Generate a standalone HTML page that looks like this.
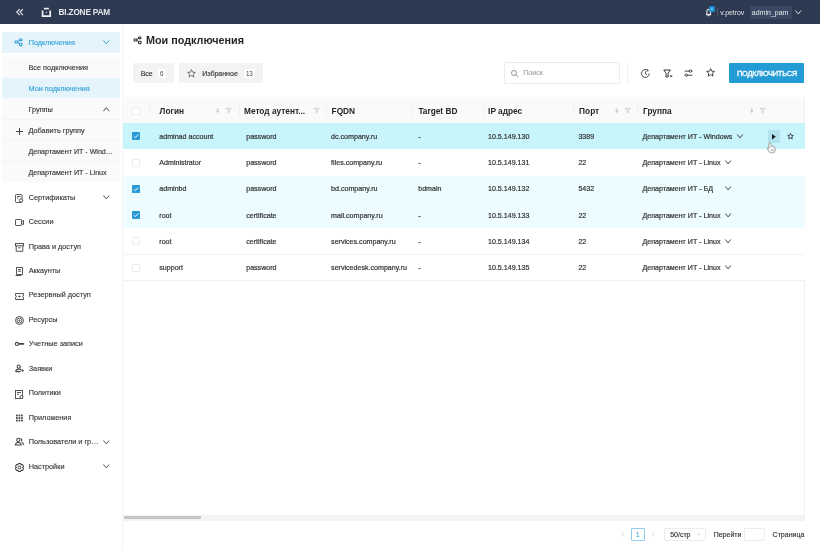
<!DOCTYPE html><html><head><meta charset="utf-8"><style>
*{box-sizing:border-box;margin:0;padding:0}
html,body{width:820px;height:551px;overflow:hidden;background:#fff;font-family:"Liberation Sans",sans-serif;color:#333}
.a{position:absolute;white-space:nowrap}
svg{position:absolute;overflow:visible}
#hdr{position:absolute;left:0;top:0;width:820px;height:24px;background:#2d3a51}
.si{position:absolute;font-size:7.3px;color:#333;line-height:10px;white-space:nowrap;-webkit-text-stroke:0.12px currentColor}
.th{position:absolute;font-size:8.3px;font-weight:bold;color:#262626;line-height:10px;white-space:nowrap}
.td{position:absolute;font-size:7.1px;color:#333;line-height:10px;white-space:nowrap;-webkit-text-stroke:0.2px currentColor}
.sep{position:absolute;width:1px;height:10px;top:105.5px;background:#efefef}
.cb{position:absolute;width:8px;height:8px;border:1px solid #ececec;background:#fff;border-radius:1px}
.cbc{position:absolute;width:8px;height:8px;background:#2a9ad6;border-radius:1px}
.tx{position:absolute;font-size:7px;color:#333;line-height:10px;white-space:nowrap;-webkit-text-stroke:0.15px currentColor}
</style></head><body><div id="root" style="position:absolute;left:0;top:0;width:820px;height:551px;will-change:transform">
<div id="hdr">
<svg style="left:15px;top:8px" width="10" height="9" viewBox="0 0 10 9"><path d="M4.7 1.1 L1.8 4.1 L4.7 7.1 M7.9 1.1 L5 4.1 L7.9 7.1" fill="none" stroke="#e6e9ee" stroke-width="1.15"/></svg>
<svg style="left:41px;top:7px" width="11" height="11" viewBox="0 0 11 11"><rect x="3" y="0.8" width="4.9" height="1.6" fill="#f2f3f5"/><path d="M1.6 3.6 V9.2 H9.2 V3.6" fill="none" stroke="#f2f3f5" stroke-width="1.7"/><rect x="4.8" y="4.9" width="1.1" height="1.1" fill="#f2f3f5"/></svg>
<div class="a" style="left:58.6px;top:6.6px;font-size:8.3px;font-weight:bold;color:#e4e7ec;line-height:11px;letter-spacing:-0.22px">BI.ZONE PAM</div>
<svg style="left:705px;top:6px" width="11" height="11" viewBox="0 0 11 11"><path d="M1 8.6 H6.2 M1.9 8.4 V5.6 C1.9 4 2.8 3.2 3.7 3.2 C4.6 3.2 5.4 4 5.4 5.6 V8.4 M3 9.6 H4.4" fill="none" stroke="#e6e9ee" stroke-width="1.1"/><rect x="4.2" y="0.3" width="5.5" height="5.5" fill="#1f9ae0"/><path d="M6.2 2.3 L7.6 3.7 M7.6 2.3 L6.2 3.7" stroke="#bfe3f7" stroke-width="0.6"/></svg>
<div class="a" style="left:716.6px;top:8.3px;width:1.2px;height:7.4px;background:#4d5a70"></div>
<div class="a" style="left:720.3px;top:7.6px;font-size:6.9px;color:#e6e9ee;line-height:10px">v.petrov</div>
<div class="a" style="left:749.5px;top:6px;width:42px;height:13px;background:#3a4963;border-radius:1px"></div>
<div class="a" style="left:751.8px;top:7.6px;font-size:7px;color:#e6e9ee;line-height:10px">admin_pam</div>
<svg style="left:795px;top:10px" width="7" height="5" viewBox="0 0 7 5"><path d="M0.5 0.5 L3.3 4 L6.1 0.5" fill="none" stroke="#e6e9ee" stroke-width="0.9"/></svg>
</div>
<div class="a" style="left:122px;top:24px;width:1px;height:527px;background:#f5f5f5"></div>
<div class="a" style="left:2px;top:32.2px;width:118px;height:20.7px;background:#e5f3fa"></div>
<svg style="left:14.4px;top:38.4px" width="10" height="9" viewBox="0 0 10 9"><rect x="1.05" y="3.05" width="2.8" height="1.9" rx="0.7" fill="none" stroke="#31a0d8" stroke-width="1.1"/><rect x="5.45" y="1.05" width="2.5" height="1.6" rx="0.7" fill="none" stroke="#31a0d8" stroke-width="1.1"/><rect x="5.45" y="5.25" width="2.6" height="2.4" rx="0.8" fill="none" stroke="#31a0d8" stroke-width="1.1"/><path d="M3.9 3.6 L5.2 2.6 M3.9 4.5 L5.2 5.5" fill="none" stroke="#31a0d8" stroke-width="1"/></svg>
<div class="si" style="left:28.7px;top:37.8px;color:#31a0d8">Подключения</div>
<svg style="left:103.39999999999999px;top:39.900000000000006px" width="6.6" height="4.6" viewBox="0 0 6.6 4.6"><path d="M0.4 0.5 L3.30 3.90 L6.20 0.5" fill="none" stroke="#31a0d8" stroke-width="0.95"/></svg>
<div class="a" style="left:2px;top:56.8px;width:118px;height:125.6px;background:#fafafa"></div>
<div class="a" style="left:2px;top:78px;width:118px;height:20.2px;background:#e5f3fa"></div>
<div class="si" style="left:28.5px;top:63.00px;color:#333;">Все подключения</div>
<div class="si" style="left:28.5px;top:84.05px;color:#31a0d8;">Мои подключения</div>
<div class="si" style="left:28.5px;top:105.10px;color:#333;">Группы</div>
<div class="si" style="left:28.5px;top:126.15px;color:#333;">Добавить группу</div>
<div class="si" style="left:28.5px;top:147.20px;color:#333;font-size:7.1px;">Департамент ИТ - Wind…</div>
<div class="si" style="left:28.5px;top:168.25px;color:#333;font-size:7.1px;">Департамент ИТ - Linux</div>
<div class="a" style="left:2px;top:119.4px;width:118px;height:0.6px;background:#f3f3f3"></div>
<div class="a" style="left:2px;top:140.4px;width:118px;height:0.6px;background:#f3f3f3"></div>
<div class="a" style="left:2px;top:161.3px;width:118px;height:0.6px;background:#f3f3f3"></div>
<svg style="left:103.19999999999999px;top:107.2px" width="6.6" height="4.6" viewBox="0 0 6.6 4.6"><path d="M0.4 4.2 L3.3 0.6 L6.2 4.2" fill="none" stroke="#444" stroke-width="0.95"/></svg>
<svg style="left:15.8px;top:127.5px" width="7" height="7" viewBox="0 0 7 7"><path d="M3.5 0 V7 M0 3.5 H7" stroke="#333" stroke-width="0.9"/></svg>
<div class="si" style="left:28.7px;top:192.70px">Сертификаты</div>
<svg style="left:15px;top:194.00px" width="9" height="9" viewBox="0 0 9 9"><rect x="0.5" y="0.5" width="6.5" height="8" rx="0.8" fill="none" stroke="#444" stroke-width="0.9"/><path d="M2 2.5 H5.5 M2 4.2 H3.5" stroke="#444" stroke-width="0.9"/><circle cx="6" cy="6.5" r="1.7" fill="#fff" stroke="#444" stroke-width="0.9"/></svg>
<svg style="left:103.39999999999999px;top:195.29999999999998px" width="6.6" height="4.6" viewBox="0 0 6.6 4.6"><path d="M0.4 0.5 L3.30 3.90 L6.20 0.5" fill="none" stroke="#444" stroke-width="0.95"/></svg>
<div class="si" style="left:28.7px;top:217.14px">Сессии</div>
<svg style="left:15px;top:218.44px" width="9" height="9" viewBox="0 0 9 9"><rect x="0.5" y="1.5" width="6" height="6" rx="0.6" fill="none" stroke="#444" stroke-width="0.9"/><path d="M6.5 3.5 L8.5 2.5 V6.5 L6.5 5.5" fill="none" stroke="#444" stroke-width="0.9"/></svg>
<div class="si" style="left:28.7px;top:241.58px">Права и доступ</div>
<svg style="left:15px;top:242.88px" width="9" height="9" viewBox="0 0 9 9"><rect x="0.5" y="0.5" width="8" height="2.3" fill="none" stroke="#444" stroke-width="0.9"/><path d="M1.2 2.8 V8.3 H7.8 V2.8 M3.2 4.8 H5.8" fill="none" stroke="#444" stroke-width="0.9"/></svg>
<div class="si" style="left:28.7px;top:266.02px">Аккаунты</div>
<svg style="left:15px;top:267.32px" width="9" height="9" viewBox="0 0 9 9"><path d="M1.5 0.5 H7.5 V7.5 H1.5 Z M3 2.5 H6 M3 4.3 H6 M0.5 8.5 H6.5" fill="none" stroke="#444" stroke-width="0.9"/></svg>
<div class="si" style="left:28.7px;top:290.46px">Резервный доступ</div>
<svg style="left:15px;top:291.76px" width="9" height="9" viewBox="0 0 9 9"><path d="M0.5 1.5 H8.5 V3.6 A0.9 0.9 0 0 0 8.5 5.4 V7.5 H0.5 V5.4 A0.9 0.9 0 0 0 0.5 3.6 Z" fill="none" stroke="#444" stroke-width="0.9"/><path d="M3.3 4.5 H5.7 M4.5 3.4 V5.6" stroke="#444" stroke-width="0.8"/></svg>
<div class="si" style="left:28.7px;top:314.90px">Ресурсы</div>
<svg style="left:15px;top:316.20px" width="9" height="9" viewBox="0 0 9 9"><circle cx="4.5" cy="4.5" r="4" fill="none" stroke="#444" stroke-width="0.9"/><circle cx="4.5" cy="4.5" r="2.4" fill="none" stroke="#444" stroke-width="0.9"/><circle cx="4.5" cy="4.5" r="0.9" fill="#444"/></svg>
<div class="si" style="left:28.7px;top:339.34px">Учетные записи</div>
<svg style="left:15px;top:340.64px" width="9" height="9" viewBox="0 0 9 9"><circle cx="1.9" cy="2.9" r="1.55" fill="none" stroke="#444" stroke-width="1.1"/><rect x="3.5" y="2.1" width="5.8" height="1.7" rx="0.85" fill="#444"/></svg>
<div class="si" style="left:28.7px;top:363.78px">Заявки</div>
<svg style="left:15px;top:365.08px" width="9" height="9" viewBox="0 0 9 9"><circle cx="3.7" cy="1.6" r="1.6" fill="none" stroke="#444" stroke-width="1.05"/><path d="M0.6 6.6 C0.8 4.6 2 4.1 3.7 4.1 C5 4.1 5.8 4.5 6.2 5.2 M0.6 6.6 H5.5" fill="none" stroke="#444" stroke-width="1.05"/><path d="M6.4 5.6 H8.8 M7.6 4.4 V6.8" stroke="#444" stroke-width="1"/></svg>
<div class="si" style="left:28.7px;top:388.22px">Политики</div>
<svg style="left:15px;top:389.52px" width="9" height="9" viewBox="0 0 9 9"><rect x="0.5" y="0.5" width="7" height="8" fill="none" stroke="#444" stroke-width="0.9"/><path d="M2 2.5 H6 M2 4.2 H4" stroke="#444" stroke-width="0.9"/><circle cx="6.5" cy="7" r="1.5" fill="#fff" stroke="#444" stroke-width="0.9"/></svg>
<div class="si" style="left:28.7px;top:412.66px">Приложения</div>
<svg style="left:15px;top:413.96px" width="9" height="9" viewBox="0 0 9 9"><rect x="1.00" y="0.60" width="1.75" height="1.75" fill="#444"/><rect x="1.00" y="3.15" width="1.75" height="1.75" fill="#444"/><rect x="1.00" y="5.70" width="1.75" height="1.75" fill="#444"/><rect x="3.55" y="0.60" width="1.75" height="1.75" fill="#444"/><rect x="3.55" y="3.15" width="1.75" height="1.75" fill="#444"/><rect x="3.55" y="5.70" width="1.75" height="1.75" fill="#444"/><rect x="6.10" y="0.60" width="1.75" height="1.75" fill="#444"/><rect x="6.10" y="3.15" width="1.75" height="1.75" fill="#444"/><rect x="6.10" y="5.70" width="1.75" height="1.75" fill="#444"/></svg>
<div class="si" style="left:28.7px;top:437.10px">Пользователи и гр…</div>
<svg style="left:15px;top:438.40px" width="9" height="9" viewBox="0 0 9 9"><circle cx="3.3" cy="1.9" r="1.6" fill="none" stroke="#444" stroke-width="1.05"/><path d="M0.4 7 C0.6 5 1.8 4.4 3.3 4.4 C4.8 4.4 5.9 5 6.1 7 Z" fill="none" stroke="#444" stroke-width="1.05"/><path d="M5.6 0.6 C7 0.6 7.4 2.6 6 3.2 M6.6 4.3 C7.8 4.6 8.4 5.6 8.5 7" fill="none" stroke="#444" stroke-width="1.05"/></svg>
<svg style="left:103.39999999999999px;top:439.7px" width="6.6" height="4.6" viewBox="0 0 6.6 4.6"><path d="M0.4 0.5 L3.30 3.90 L6.20 0.5" fill="none" stroke="#444" stroke-width="0.95"/></svg>
<div class="si" style="left:28.7px;top:461.54px">Настройки</div>
<svg style="left:15px;top:462.84px" width="9" height="9" viewBox="0 0 9 9"><path d="M2.91 1.72 L3.42 0.44 L5.58 0.44 L6.09 1.72 L6.11 1.73 L7.48 1.54 L8.55 3.41 L7.70 4.49 L7.70 4.51 L8.55 5.59 L7.48 7.46 L6.11 7.27 L6.09 7.28 L5.58 8.56 L3.42 8.56 L2.91 7.28 L2.89 7.27 L1.52 7.46 L0.45 5.59 L1.30 4.51 L1.30 4.49 L0.45 3.41 L1.52 1.54 L2.89 1.73 Z" fill="none" stroke="#444" stroke-width="1.05" stroke-linejoin="round"/><circle cx="4.5" cy="4.5" r="1.4" fill="none" stroke="#444" stroke-width="1"/></svg>
<svg style="left:103.39999999999999px;top:464.14000000000004px" width="6.6" height="4.6" viewBox="0 0 6.6 4.6"><path d="M0.4 0.5 L3.30 3.90 L6.20 0.5" fill="none" stroke="#444" stroke-width="0.95"/></svg>
<svg style="left:133.4px;top:35.6px" width="10" height="9" viewBox="0 0 10 9"><rect x="1.05" y="3.05" width="2.8" height="1.9" rx="0.7" fill="none" stroke="#333" stroke-width="1.1"/><rect x="5.45" y="1.05" width="2.5" height="1.6" rx="0.7" fill="none" stroke="#333" stroke-width="1.1"/><rect x="5.45" y="5.25" width="2.6" height="2.4" rx="0.8" fill="none" stroke="#333" stroke-width="1.1"/><path d="M3.9 3.6 L5.2 2.6 M3.9 4.5 L5.2 5.5" fill="none" stroke="#333" stroke-width="1"/></svg>
<div class="a" style="left:146px;top:34px;font-size:10.8px;font-weight:bold;color:#262626;line-height:13px">Мои подключения</div>
<div class="a" style="left:132.8px;top:62.5px;width:41.2px;height:20.7px;background:#f3f3f3;border-radius:1px"></div>
<div class="tx" style="left:140.7px;top:68.7px">Все</div>
<div class="a" style="left:157.5px;top:69.2px;width:8.5px;height:8.5px;background:#fff;border-radius:1px"></div>
<div class="a" style="left:157.5px;top:68.9px;width:8.5px;font-size:6.3px;line-height:9px;text-align:center;color:#444">6</div>
<div class="a" style="left:179px;top:62.5px;width:83.7px;height:20.7px;background:#f3f3f3;border-radius:1px"></div>
<svg style="left:187.4px;top:69px" width="9" height="9" viewBox="0 0 9 9"><path d="M4.5 0.6 L5.6 3.2 L8.4 3.4 L6.3 5.2 L6.9 8 L4.5 6.5 L2.1 8 L2.7 5.2 L0.6 3.4 L3.4 3.2 Z" fill="none" stroke="#555" stroke-width="0.8" stroke-linejoin="round"/></svg>
<div class="tx" style="left:202.3px;top:68.7px">Избранное</div>
<div class="a" style="left:243.6px;top:69.2px;width:11.2px;height:8.5px;background:#fff;border-radius:1px"></div>
<div class="a" style="left:243.6px;top:68.9px;width:11.2px;font-size:6.3px;letter-spacing:-0.2px;line-height:9px;text-align:center;color:#444">13</div>
<div class="a" style="left:504px;top:62px;width:116px;height:22px;border:1px solid #ececec;border-radius:1px;background:#fff"></div>
<svg style="left:510.6px;top:69.6px" width="8.2" height="7.4" viewBox="0 0 8.2 7.4"><circle cx="3" cy="3" r="2.5" fill="none" stroke="#888" stroke-width="0.9"/><path d="M4.9 4.9 L7.6 7.1" stroke="#888" stroke-width="0.9"/></svg>
<div class="tx" style="left:523.3px;top:68px;color:#a6a6a6">Поиск</div>
<div class="a" style="left:627px;top:62.6px;width:1px;height:20.7px;background:#f0f0f0"></div>
<svg style="left:641px;top:68.6px" width="9.2" height="9" viewBox="0 0 9.2 9"><path d="M8.3 4.5 A3.9 3.9 0 1 1 6.8 1.4" fill="none" stroke="#333" stroke-width="0.9"/><path d="M6.2 0.2 L7.4 1.7 L5.6 2.2" fill="none" stroke="#333" stroke-width="0.8"/><path d="M4.4 2.3 V4.7 L6 5.8" fill="none" stroke="#333" stroke-width="0.9"/></svg>
<svg style="left:662.5px;top:68.6px" width="10" height="9" viewBox="0 0 10 9"><path d="M0.8 1 H7.4 L5.1 4.2 V8 H3.1 V4.2 Z" fill="none" stroke="#333" stroke-width="1" stroke-linejoin="round"/><path d="M7.2 6.2 L9.2 8.2 M9.2 6.2 L7.2 8.2" stroke="#333" stroke-width="0.9"/></svg>
<svg style="left:684.4px;top:68.6px" width="9" height="9" viewBox="0 0 9 9"><path d="M0.6 2.1 H8.5 M0.6 6.2 H8.5" stroke="#333" stroke-width="0.9"/><ellipse cx="6.4" cy="2.1" rx="1.3" ry="1.1" fill="#fff" stroke="#333" stroke-width="0.9"/><ellipse cx="2.4" cy="6.2" rx="1.3" ry="1.1" fill="#fff" stroke="#333" stroke-width="0.9"/></svg>
<svg style="left:706.4px;top:68.4px" width="9.2" height="9" viewBox="0 0 9 9"><path d="M4.5 0.6 L5.6 3.2 L8.4 3.4 L6.3 5.2 L6.9 8.2 L4.5 6.6 L2.1 8.2 L2.7 5.2 L0.6 3.4 L3.4 3.2 Z" fill="none" stroke="#333" stroke-width="0.9" stroke-linejoin="round"/></svg>
<div class="a" style="left:728.8px;top:62.7px;width:75.7px;height:20.4px;background:#239bd5;border-radius:1px"></div>
<div class="a" style="left:729.1px;top:68.7px;width:75.7px;text-align:center;font-size:7.5px;color:#fff;line-height:10px;letter-spacing:-0.28px;-webkit-text-stroke:0.3px #fff">ПОДКЛЮЧИТЬСЯ</div>
<div class="a" style="left:123px;top:97px;width:681.5px;height:26px;background:#fafafa"></div>
<div class="a" style="left:804px;top:97px;width:1px;height:422px;background:#efefef"></div>
<div class="a" style="left:123px;top:123.00px;width:681.5px;height:26.25px;background:#c8f4fc"></div>
<div class="a" style="left:123px;top:149.25px;width:681.5px;height:26.25px;background:#fff"></div>
<div class="a" style="left:123px;top:175.50px;width:681.5px;height:26.25px;background:#edfcfe"></div>
<div class="a" style="left:123px;top:201.75px;width:681.5px;height:26.25px;background:#edfcfe"></div>
<div class="a" style="left:123px;top:228.00px;width:681.5px;height:26.25px;background:#fff"></div>
<div class="a" style="left:123px;top:254.25px;width:681.5px;height:26.25px;background:#fff"></div>
<div class="a" style="left:123px;top:254px;width:681.5px;height:1px;background:#f2f2f2"></div>
<div class="a" style="left:123px;top:280px;width:681.5px;height:1px;background:#f2f2f2"></div>
<div class="sep" style="left:148.8px"></div>
<div class="sep" style="left:239.0px"></div>
<div class="sep" style="left:325.9px"></div>
<div class="sep" style="left:412.2px"></div>
<div class="sep" style="left:482.5px"></div>
<div class="sep" style="left:573.2px"></div>
<div class="sep" style="left:637.3px"></div>
<div class="cb" style="left:132.2px;top:106.6px"></div>
<div class="th" style="left:159.6px;top:105.5px">Логин</div>
<div class="th" style="left:244px;top:105.5px">Метод аутент...</div>
<div class="th" style="left:331.6px;top:105.5px">FQDN</div>
<div class="th" style="left:418.4px;top:105.5px">Target BD</div>
<div class="th" style="left:488.1px;top:105.5px">IP адрес</div>
<div class="th" style="left:579.1px;top:105.5px">Порт</div>
<div class="th" style="left:643px;top:105.5px">Группа</div>
<svg style="left:215.5px;top:107.8px" width="3.4" height="5.2" viewBox="0 0 3.4 5.2"><path d="M0.3 2.2 L1.7 0.2 L3.1 2.2 Z M0.3 3 L1.7 5 L3.1 3 Z" fill="#bdbdbd"/></svg>
<svg style="left:614.5px;top:107.8px" width="3.4" height="5.2" viewBox="0 0 3.4 5.2"><path d="M0.3 2.2 L1.7 0.2 L3.1 2.2 Z M0.3 3 L1.7 5 L3.1 3 Z" fill="#bdbdbd"/></svg>
<svg style="left:749.5px;top:107.8px" width="3.4" height="5.2" viewBox="0 0 3.4 5.2"><path d="M0.3 2.2 L1.7 0.2 L3.1 2.2 Z M0.3 3 L1.7 5 L3.1 3 Z" fill="#bdbdbd"/></svg>
<svg style="left:226.2px;top:107.9px" width="5.4" height="4.8" viewBox="0 0 5.4 4.8"><path d="M0.4 0.4 H5 L3.3 2.5 V4.4 H2.1 V2.5 Z" fill="none" stroke="#c2c2c2" stroke-width="0.75" stroke-linejoin="round"/></svg>
<svg style="left:313.5px;top:107.9px" width="5.4" height="4.8" viewBox="0 0 5.4 4.8"><path d="M0.4 0.4 H5 L3.3 2.5 V4.4 H2.1 V2.5 Z" fill="none" stroke="#c2c2c2" stroke-width="0.75" stroke-linejoin="round"/></svg>
<svg style="left:625px;top:107.9px" width="5.4" height="4.8" viewBox="0 0 5.4 4.8"><path d="M0.4 0.4 H5 L3.3 2.5 V4.4 H2.1 V2.5 Z" fill="none" stroke="#c2c2c2" stroke-width="0.75" stroke-linejoin="round"/></svg>
<svg style="left:760.4px;top:107.9px" width="5.4" height="4.8" viewBox="0 0 5.4 4.8"><path d="M0.4 0.4 H5 L3.3 2.5 V4.4 H2.1 V2.5 Z" fill="none" stroke="#c2c2c2" stroke-width="0.75" stroke-linejoin="round"/></svg>
<div class="cbc" style="left:132px;top:132.32px"></div>
<svg style="left:132px;top:132.32px" width="8" height="8" viewBox="0 0 8 8"><path d="M1.8 4.1 L3.4 5.6 L6.3 2.4" fill="none" stroke="#fff" stroke-width="0.9"/></svg>
<div class="td" style="left:159.3px;top:131.93px">adminad account</div>
<div class="td" style="left:246.2px;top:131.93px">password</div>
<div class="td" style="left:331.1px;top:131.93px">dc.company.ru</div>
<div class="td" style="left:418.2px;top:131.93px">-</div>
<div class="td" style="left:488px;top:131.93px">10.5.149.130</div>
<div class="td" style="left:578.4px;top:131.93px">3389</div>
<div class="td" style="left:642.4px;top:131.93px">Департамент ИТ - Windows</div>
<svg style="left:737.0px;top:133.825px" width="6.2" height="4.6" viewBox="0 0 6.2 4.6"><path d="M0.4 0.5 L3.10 3.90 L5.80 0.5" fill="none" stroke="#3a3a3a" stroke-width="0.95"/></svg>
<div class="cb" style="left:132px;top:158.57px"></div>
<div class="td" style="left:159.3px;top:158.18px">Administrator</div>
<div class="td" style="left:246.2px;top:158.18px">password</div>
<div class="td" style="left:331.1px;top:158.18px">files.company.ru</div>
<div class="td" style="left:418.2px;top:158.18px">-</div>
<div class="td" style="left:488px;top:158.18px">10.5.149.131</div>
<div class="td" style="left:578.4px;top:158.18px">22</div>
<div class="td" style="left:642.4px;top:158.18px">Департамент ИТ - Linux</div>
<svg style="left:724.8000000000001px;top:160.075px" width="6.2" height="4.6" viewBox="0 0 6.2 4.6"><path d="M0.4 0.5 L3.10 3.90 L5.80 0.5" fill="none" stroke="#3a3a3a" stroke-width="0.95"/></svg>
<div class="cbc" style="left:132px;top:184.82px"></div>
<svg style="left:132px;top:184.82px" width="8" height="8" viewBox="0 0 8 8"><path d="M1.8 4.1 L3.4 5.6 L6.3 2.4" fill="none" stroke="#fff" stroke-width="0.9"/></svg>
<div class="td" style="left:159.3px;top:184.43px">adminbd</div>
<div class="td" style="left:246.2px;top:184.43px">password</div>
<div class="td" style="left:331.1px;top:184.43px">bd.company.ru</div>
<div class="td" style="left:418.2px;top:184.43px">bdmain</div>
<div class="td" style="left:488px;top:184.43px">10.5.149.132</div>
<div class="td" style="left:578.4px;top:184.43px">5432</div>
<div class="td" style="left:642.4px;top:184.43px">Департамент ИТ - БД</div>
<svg style="left:724.8000000000001px;top:186.325px" width="6.2" height="4.6" viewBox="0 0 6.2 4.6"><path d="M0.4 0.5 L3.10 3.90 L5.80 0.5" fill="none" stroke="#3a3a3a" stroke-width="0.95"/></svg>
<div class="cbc" style="left:132px;top:211.07px"></div>
<svg style="left:132px;top:211.07px" width="8" height="8" viewBox="0 0 8 8"><path d="M1.8 4.1 L3.4 5.6 L6.3 2.4" fill="none" stroke="#fff" stroke-width="0.9"/></svg>
<div class="td" style="left:159.3px;top:210.68px">root</div>
<div class="td" style="left:246.2px;top:210.68px">certificate</div>
<div class="td" style="left:331.1px;top:210.68px">mail.company.ru</div>
<div class="td" style="left:418.2px;top:210.68px">-</div>
<div class="td" style="left:488px;top:210.68px">10.5.149.133</div>
<div class="td" style="left:578.4px;top:210.68px">22</div>
<div class="td" style="left:642.4px;top:210.68px">Департамент ИТ - Linux</div>
<svg style="left:724.8000000000001px;top:212.575px" width="6.2" height="4.6" viewBox="0 0 6.2 4.6"><path d="M0.4 0.5 L3.10 3.90 L5.80 0.5" fill="none" stroke="#3a3a3a" stroke-width="0.95"/></svg>
<div class="cb" style="left:132px;top:237.32px"></div>
<div class="td" style="left:159.3px;top:236.93px">root</div>
<div class="td" style="left:246.2px;top:236.93px">certificate</div>
<div class="td" style="left:331.1px;top:236.93px">services.company.ru</div>
<div class="td" style="left:418.2px;top:236.93px">-</div>
<div class="td" style="left:488px;top:236.93px">10.5.149.134</div>
<div class="td" style="left:578.4px;top:236.93px">22</div>
<div class="td" style="left:642.4px;top:236.93px">Департамент ИТ - Linux</div>
<svg style="left:724.8000000000001px;top:238.825px" width="6.2" height="4.6" viewBox="0 0 6.2 4.6"><path d="M0.4 0.5 L3.10 3.90 L5.80 0.5" fill="none" stroke="#3a3a3a" stroke-width="0.95"/></svg>
<div class="cb" style="left:132px;top:263.57px"></div>
<div class="td" style="left:159.3px;top:263.18px">support</div>
<div class="td" style="left:246.2px;top:263.18px">password</div>
<div class="td" style="left:331.1px;top:263.18px">servicedesk.company.ru</div>
<div class="td" style="left:418.2px;top:263.18px">-</div>
<div class="td" style="left:488px;top:263.18px">10.5.149.135</div>
<div class="td" style="left:578.4px;top:263.18px">22</div>
<div class="td" style="left:642.4px;top:263.18px">Департамент ИТ - Linux</div>
<svg style="left:724.8000000000001px;top:265.075px" width="6.2" height="4.6" viewBox="0 0 6.2 4.6"><path d="M0.4 0.5 L3.10 3.90 L5.80 0.5" fill="none" stroke="#3a3a3a" stroke-width="0.95"/></svg>
<div class="a" style="left:768.1px;top:130.3px;width:12.4px;height:12.3px;background:#b0e3ec;border-radius:1px"></div>
<svg style="left:772.3px;top:134px" width="4" height="5.5" viewBox="0 0 4 5.5"><path d="M0 0 L3.8 2.75 L0 5.5 Z" fill="#1a1a1a"/></svg>
<svg style="left:787.4px;top:133.3px" width="7" height="6.5" viewBox="0 0 9 9"><path d="M4.5 0.6 L5.6 3.2 L8.4 3.4 L6.3 5.2 L6.9 8.2 L4.5 6.6 L2.1 8.2 L2.7 5.2 L0.6 3.4 L3.4 3.2 Z" fill="none" stroke="#222" stroke-width="1.1" stroke-linejoin="round"/></svg>
<svg style="left:765.8px;top:141.6px" width="11" height="12" viewBox="0 0 11 12"><path d="M2.9 1.4 C3.1 0.6 4.2 0.6 4.5 1.3 L5.5 4.3 C6.1 4 6.9 4.1 7.3 4.6 C7.9 4.4 8.7 4.7 8.9 5.3 L9.4 7.3 C9.7 8.9 8.7 10.4 7 10.7 L5.4 10.9 C4.2 11 3.2 10.3 2.7 9.3 L1.3 6.6 C1 6 1.6 5.4 2.2 5.7 L3.1 6.3 L2.6 2.4 Z" fill="#f2f2f2" stroke="#6e6e6e" stroke-width="0.6" stroke-linejoin="round"/><path d="M5.2 7.6 H8 M5.4 8.8 H8" stroke="#b5b5b5" stroke-width="0.7"/></svg>
<div class="a" style="left:123px;top:515.2px;width:681.5px;height:5.8px;background:#f3f3f3"></div>
<div class="a" style="left:124.1px;top:516px;width:77.2px;height:2.9px;background:#c6c6c6;border-radius:0.5px"></div>
<svg style="left:620.8px;top:532.4px" width="3" height="4" viewBox="0 0 3 4"><path d="M2.6 0.3 L0.6 2 L2.6 3.7" fill="none" stroke="#ccc" stroke-width="0.7"/></svg>
<div class="a" style="left:631px;top:528px;width:14px;height:13px;border:1px solid #8fcbea;border-radius:1px;background:#fff"></div>
<div class="a" style="left:631px;top:529.8px;width:13.6px;text-align:center;font-size:7px;color:#31a0d8;line-height:10px">1</div>
<svg style="left:651.5px;top:532.4px" width="3" height="4" viewBox="0 0 3 4"><path d="M0.4 0.3 L2.4 2 L0.4 3.7" fill="none" stroke="#ccc" stroke-width="0.7"/></svg>
<div class="a" style="left:664px;top:528px;width:42px;height:13px;border:1px solid #ececec;border-radius:1px;background:#fff"></div>
<div class="tx" style="left:670.2px;top:530.1px">50/стр</div>
<svg style="left:696.5px;top:533px" width="4" height="3" viewBox="0 0 4 3"><path d="M0.3 0.5 L2 2.3 L3.7 0.5" fill="none" stroke="#bbb" stroke-width="0.6"/></svg>
<div class="tx" style="left:713.7px;top:530.1px">Перейти</div>
<div class="a" style="left:744px;top:528px;width:21px;height:13px;border:1px solid #ececec;border-radius:1px;background:#fff"></div>
<div class="tx" style="left:772.6px;top:530.1px">Страница</div>
</div></body></html>
